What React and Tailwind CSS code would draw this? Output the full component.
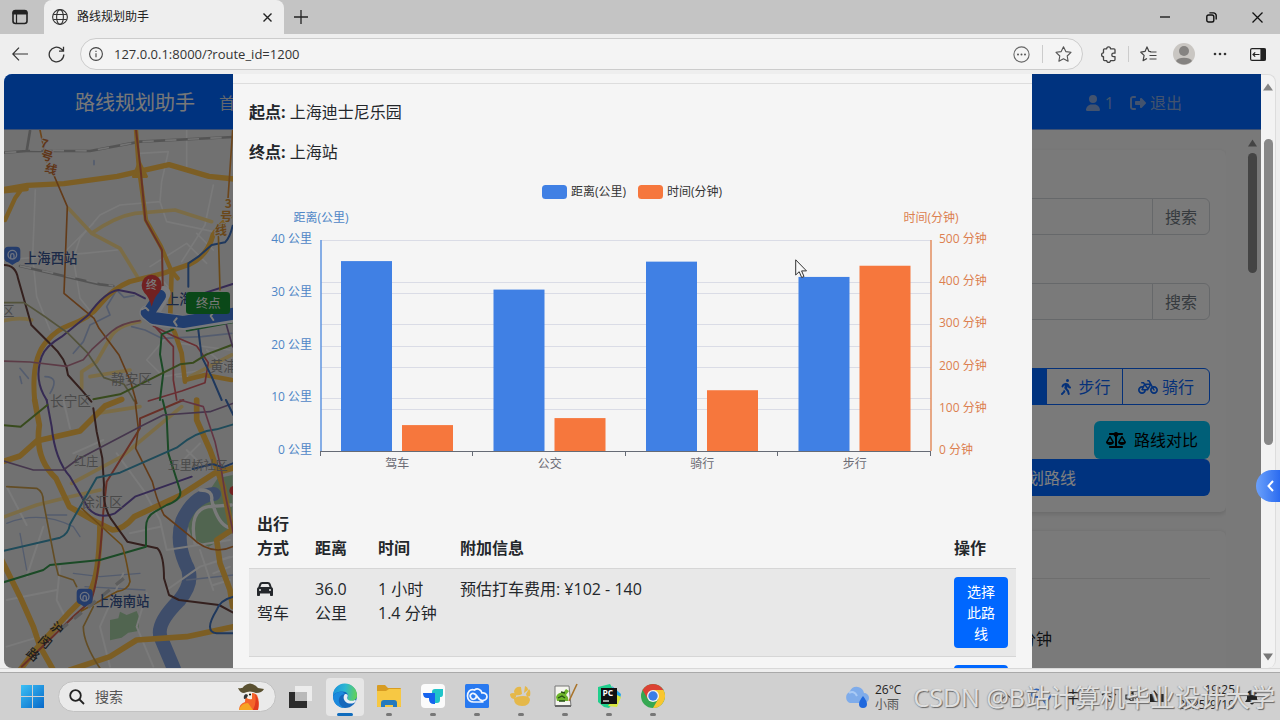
import React from "react";
import { FaUser, FaRightFromBracket, FaPersonWalking, FaBicycle, FaScaleBalanced, FaCar } from "react-icons/fa6";

function TabStrip() {
  return (
    <header className="flex h-[34px] shrink-0 items-stretch bg-[#c4c4c4]">
      <button aria-label="标签页操作" className="flex w-[44px] items-center justify-center pr-1">
        <svg width="16" height="16" viewBox="0 0 16 16" fill="none" stroke="#222">
          <rect x="1" y="1.5" width="14" height="13" rx="2.5" strokeWidth="1.6" />
          <path d="M1 5V4a2.500 2.500 0 0 1 2.500-2.500h9A2.500 2.500 0 0 1 15 4v1z" fill="#222" />
          <path d="M4.500 5v9.500" strokeWidth="1.200" />
        </svg>
      </button>
      <div className="flex w-[240px] items-center rounded-t-lg bg-[#eeeeee] pl-2 pr-2.5 text-xs text-[#222]">
        <svg width="16" height="16" viewBox="0 0 16 16" fill="none" stroke="#333" strokeWidth="1.1">
          <circle cx="8" cy="8" r="7.4" />
          <ellipse cx="8" cy="8" rx="3.4" ry="7.400" />
          <path d="M1.300 5.500h13.400M1.300 10.500h13.400" />
        </svg>
        <span className="ml-[9px] flex-1">路线规划助手</span>
        <button aria-label="关闭标签页" className="p-0.5">
          <svg width="9" height="9" viewBox="0 0 9 9" stroke="#222" strokeWidth="1.4"><path d="M.5.5l8 8M8.500.5l-8 8" /></svg>
        </button>
      </div>
      <button aria-label="新建标签页" className="px-2.5">
        <svg width="14" height="14" viewBox="0 0 14 14" stroke="#222" strokeWidth="1.300"><path d="M7 0v14M0 7h14" /></svg>
      </button>
      <div className="ml-auto flex">
        <button aria-label="最小化" className="flex w-[46px] items-center justify-center">
          <svg width="10" height="10" viewBox="0 0 10 10" stroke="#111" strokeWidth="1.300"><path d="M0 5h10" /></svg>
        </button>
        <button aria-label="还原" className="flex w-[46px] items-center justify-center">
          <svg width="11" height="11" viewBox="0 0 11 11" fill="none" stroke="#111" strokeWidth="1.4">
            <rect x=".8" y="3" width="7" height="7" rx="1.8" />
            <path d="M3.400 .9h4A2.700 2.700 0 0 1 10.200 3.600v4" />
          </svg>
        </button>
        <button aria-label="关闭" className="flex w-[46px] items-center justify-center">
          <svg width="11" height="11" viewBox="0 0 11 11" stroke="#111" strokeWidth="1.300"><path d="M.5.5l10 10M10.500.5l-10 10" /></svg>
        </button>
      </div>
    </header>
  );
}

function AddressBar() {
  return (
    <nav className="flex h-10 shrink-0 items-center bg-[#eeeeee] text-[#333]">
      <button aria-label="后退" className="ml-3">
        <svg width="16" height="14" viewBox="0 0 16 14" fill="none" stroke="#333" strokeWidth="1.2"><path d="M16 7H1M7 .7L.8 7 7 13.300" /></svg>
      </button>
      <button aria-label="刷新" className="ml-5">
        <svg width="17" height="17" viewBox="0 0 17 17" fill="none" stroke="#333" strokeWidth="1.3">
          <path d="M15.800 8.500A7.300 7.300 0 1 1 13.300 3L15.500 5M15.500 .7V5.200H11" />
        </svg>
      </button>
      <div className="ml-[15px] flex h-8 flex-1 items-center rounded-full border border-[#cccccc] bg-[#f4f4f4] pl-2 pr-2.5">
        <svg width="14" height="14" viewBox="0 0 14 14" fill="none" stroke="#444" strokeWidth="1.100">
          <circle cx="7" cy="7" r="6.400" /><path d="M7 6.200v4M7 3.800v1.200" />
        </svg>
        <input aria-label="地址" defaultValue="127.0.0.1:8000/?route_id=1200" className="ml-[11px] min-w-0 flex-1 bg-transparent pt-0.5 text-[13px] text-[#333] outline-none" />
        <svg width="17" height="17" viewBox="0 0 17 17" fill="none" stroke="#666" strokeWidth="1.1">
          <circle cx="8.500" cy="8.500" r="7.600" />
          <g fill="#555" stroke="none"><circle cx="5" cy="8.500" r="1" /><circle cx="8.500" cy="8.500" r="1" /><circle cx="12" cy="8.500" r="1" /></g>
        </svg>
        <span className="mx-3 h-[18px] w-px bg-[#cccccc]" />
        <svg width="17" height="16" viewBox="0 0 17 16" fill="none" stroke="#555" strokeWidth="1.100" strokeLinejoin="round">
          <path d="M8.500 .8l2.300 4.800 5.200.7-3.800 3.700.9 5.200-4.600-2.500-4.600 2.500.9-5.200L1 6.300l5.200-.7z" />
        </svg>
      </div>
      <button aria-label="扩展" className="ml-[17px]">
        <svg width="17" height="17" viewBox="0 0 17 17" fill="none" stroke="#444" strokeWidth="1.3" strokeLinejoin="round">
          <path d="M4.500 2.800h2.200a1.900 1.900 0 0 1 3.800 0H14q1 0 1 1v3.400h-1.500a1.700 1.700 0 0 0 0 3.400H15v3q0 1-1 1h-3.500a1.900 1.900 0 0 1-3.800 0H4.500q-1 0-1-1v-3a1.900 1.900 0 0 1 0-3.800v-3q0-1 1-1z" />
        </svg>
      </button>
      <span className="mx-[11px] h-4 w-px bg-[#cccccc]" />
      <button aria-label="收藏夹">
        <svg width="17" height="16" viewBox="0 0 17 16" fill="none" stroke="#444" strokeWidth="1.200" strokeLinejoin="round">
          <path d="M11 5.600L9 5.400 7 .9 5 5.400.8 6.200l3.300 3.200-1 5.200 3.900-2.100M10 6h6.500M9.500 9.500h7M9.500 13h7" />
        </svg>
      </button>
      <button aria-label="用户" className="ml-4">
        <svg width="22" height="22" viewBox="0 0 22 22"><circle cx="11" cy="11" r="11" fill="#c9c6c2" /><circle cx="11" cy="8" r="5" fill="#858381" /><path d="M3 18a8.500 5 0 0 1 16 0 11 11 0 0 1-16 0z" fill="#858381" /></svg>
      </button>
      <button aria-label="设置及其他" className="ml-[18px]">
        <svg width="14" height="4" viewBox="0 0 14 4" fill="#333"><circle cx="2" cy="2" r="1.300" /><circle cx="7" cy="2" r="1.300" /><circle cx="12" cy="2" r="1.300" /></svg>
      </button>
      <button aria-label="侧边栏" className="ml-[23px] mr-3.5">
        <svg width="16" height="13" viewBox="0 0 16 13" fill="none" stroke="#222" strokeWidth="1.2">
          <rect x=".6" y=".6" width="14.800" height="11.800" rx="1.5" /><path d="M11 1h4v11h-4z" fill="#222" /><path d="M9.500 6.500H3M5.200 4.300L3 6.500l2.200 2.200" />
        </svg>
      </button>
    </nav>
  );
}

function RailPin({ x, y }) {
  return (
    <g transform={`translate(${x} ${y})`}>
      <path d="M-12-26h24q12 0 12 12V8q0 10-11 13L0 29-13 21q-11-3-11-13V-14q0-12 12-12z" fill="#4878d8" />
      <circle r="13" cy="-2" fill="none" stroke="#dbe6ff" strokeWidth="4" />
      <path d="M-5 10V0a5 5 0 0 1 10 0v10" fill="none" stroke="#dbe6ff" strokeWidth="4" />
    </g>
  );
}

function CityMap() {
  return (
    <svg className="h-full w-full bg-[#e2e2e2]" fill="none" strokeLinejoin="round" strokeLinecap="round">
      <g transform="translate(-4 0) scale(.33333)">
        <g stroke="#f4f4f4" strokeWidth="5">
          <path d="M106 180L98 380l12 120 40 100M560 0v120M420 70l85-5-20 90-5 60-120 10-60 30-60 70-20 60 20 120 40 50M12 390l240-20 100-10M200 360l80-80M480 215l20 60 140 30M640 165l-25 120-70 110M450 410l110-70 60 60M470 430l50 60M640 360l-50-50M500 620l-60 70 50 50 120-20M540 640l150 20M620 660l70 60M530 740h120" />
        </g>
        <g stroke="#a9a9a9" strokeWidth="8">
          <path d="M10 68l70-5 10-60M80 63l190 0 150-28 280-14M60 408l240 55 40 5" />
          <path d="M15 68l65-5M90 60l180 3 150-28 280-14M60 408l280 60" stroke="#e8e8e8" strokeWidth="5" strokeDasharray="34 34" strokeLinecap="butt" />
        </g>
        <g stroke="#a8b9dc" strokeWidth="5">
          <path d="M350 480l-30 50 10 25-60 30-20 50-30 35M352 482l20 20 30-5M395 590l40 10 50 25 120-5 90-10M135 740q45 0 15 50M60 715l25 30M282 92v12M60 740l5 20" />
        </g>
        <g stroke="#f7d98c" strokeWidth="11">
          <path d="M205 235l70 75 85 45 55 90M275 310q70-50 130-60l120-10 110 35M0 575q50-15 95-5M420 575q-70 10-90 50l-40 70-45 30 0 50M270 740l120-20M570 740l125-65" />
        </g>
        <g stroke="#f8bc48">
          <path d="M12 178l70-12 110-5 160-22 75-17 80-18 120 35 75 8" strokeWidth="16" />
          <path d="M408 0l8 110 22 160 45 80 30 70 20 25" strokeWidth="13" />
          <path d="M104 810q-12-130 40-180 25-30 65-45 60-20 90-60 40-50 90-70l100-25 60-20q70-20 90-95 20-30 50-55" strokeWidth="15" />
          <path d="M515 420l-5 160 15 30 20 60 10 85M555 750l60-15 80 15" strokeWidth="14" />
          <path d="M15 270l30-65 25-35M0 185l80-8" strokeWidth="13" />
          <path d="M400 140l18-45 22 45z" strokeWidth="8" fill="#f8bc48" />
        </g>
        <path d="M155 120l47 110-10 260 90 75 15 30 60 80 35 80 18 65" stroke="#c77732" strokeWidth="5" />
        <path d="M120 0l20 95M698 0l-15 220" stroke="#d98d39" strokeWidth="5" />
        <path d="M408 0l14 120 14 150 50 90 3 140" stroke="#cf654d" strokeWidth="6" />
        <path d="M12 405q35 0 42 40l40 140 60 60q45 40 50 90l45 50 25 30" stroke="#68403c" strokeWidth="6" />
        <path d="M140 810q-40-60-15-130 10-30 60-60l80-65q50-70 90-75l50 10 30 15M580 500l118-38" stroke="#6c55a7" strokeWidth="6" />
        <path d="M12 518h60l60 40 70 50 60 60 50 75 60 20q20 30 30 50" stroke="#a6a677" strokeWidth="5" />
        <path d="M0 693l90 3 110 13 50-20 25-30 60-55q30-25 85-32" stroke="#b9768c" strokeWidth="5" />
        <path d="M460 588l60 30 70 30 35 50-10 60-70 25-100 30M465 590l55 60v100l10 60" stroke="#d25c64" strokeWidth="5" />
        <path d="M565 470V400l30-20 40-35 40-8q15-15 23-50M595 600l10 80 30 60 30 70" stroke="#3e70ba" strokeWidth="6" />
        <path d="M520 598l-35 15-5 60 10 55-10 82M560 602l138-25" stroke="#36944c" strokeWidth="6" />
        <path d="M280 808l80-15 180-90 40-5 40-25 75-28" stroke="#71963a" strokeWidth="6" />
        <path d="M655 310l5 170" stroke="#d6942f" strokeWidth="5" />
        <path d="M675 570l23 80" stroke="#846698" strokeWidth="5" />

        <path d="M440 548l25 18 90 12 170-26M455 550l35-60" stroke="#f2f4fa" strokeWidth="44" />
        <path d="M440 548l20 16 90 12 170-28M448 545l32-48" stroke="#437bdd" strokeWidth="36" />
        <path d="M530 565l-8 10 8 12M640 548l-8 10 8 12M425 538l12-5 8 8" stroke="#f5f5f5" strokeWidth="6" />

        <g fontFamily='"Noto Sans CJK SC"' stroke="none">
          <text x="72" y="398" fontSize="40" fill="#37538e" fontWeight="500">上海西站</text>
          <text x="498" y="523" fontSize="40" fill="#37538e" fontWeight="500">上海</text>
          <text x="5" y="556" fontSize="38" fill="#949494">区</text>
          <text x="333" y="762" fontSize="41" fill="#949494">静安区</text>
          <text x="630" y="724" fontSize="40" fill="#949494">黄浦</text>
          <g fill="#c06c32" fontSize="36" fontWeight="700" stroke="#e2e2e2" strokeWidth="6" paintOrder="stroke">
            <text transform="translate(120 50) rotate(15)">7</text><text transform="translate(120 84) rotate(18)">号</text><text transform="translate(132 124) rotate(18)">线</text>
          </g>
          <g fill="#d58f32" fontSize="36" fontWeight="700" stroke="#e2e2e2" strokeWidth="6" paintOrder="stroke">
            <text x="674" y="234">3</text><text x="661" y="274">号</text><text x="645" y="315">线</text>
          </g>
        </g>
        <RailPin x={37} y={376} />
        <path d="M455 530q-8-30-22-42a30 32 0 1 1 44 0q-14 12-22 42z" fill="#e34343" />
        <rect x="558" y="486" width="132" height="66" rx="10" fill="#159130" />
        <g fontFamily='"Noto Sans CJK SC"' fill="#f4f4f4">
          <text x="438" y="477" fontSize="33" fontWeight="500">终</text>
          <text x="588" y="533" fontSize="37">终点</text>
        </g>
      </g>

      <g transform="translate(-4 270) scale(.33333)">
        <path d="M698 225l-45 10-20 30-50 35-27 55 20 60 50 25 70-40z" fill="#a3cba0" />
        <path d="M330 660l25-5 5-20 20 10 30-12 8 20-3 40-30 5-20 15-35 8z" fill="#a3cba0" />
        <path d="M642 282q-60 5-95 80-20 60 10 130 30 50-20 110-70 70-55 110l40 95" stroke="#7d9bd5" strokeWidth="42" />
        <path d="M560 540l140-15M20 370q100-40 200 10l20 30M140 345h60M60 400l20 110M220 520l80 10 120-10M255 560l180 10M590 700l100-20" stroke="#a8b9dc" strokeWidth="4" />
        <g stroke="#f4f4f4" strokeWidth="6">
          <path d="M20 260l60 115M130 380l-50 150M180 500l-10 100 30 60M190 0l20 85M350 160l80 110 50 90 20 90 190-30M310 120l-90 40M370 520l-70 160 30 120M390 400l90-20M500 570l100-70 98-30M600 450l40 120M20 600l150-30M20 740l100-30M440 580l-30 100 50 120M560 150l60 60M540 190l60-60M630 490l60-20M640 520l50-20M640 555l50-15" />
          <path d="M585 430q-20-100 40-110l70-5M600 270q40 0 35 30 20 80 60 85" strokeWidth="10" />
        </g>
        <g stroke="#f7d98c" strokeWidth="11">
          <path d="M0 355l110-40 100-25 90-20M215 250l150-80 180-150M290 40l130-20" />
        </g>
        <g stroke="#f8bc48" strokeWidth="17">
          <path d="M104 0l14 75q-15 100 50 160l40 85 80 45 50 25q30 0 65-40l140-65 100-65 70-20" />
          <path d="M0 188l60-20 50-45 130-30 75-75 50-20M0 470l60 120 40 90 20 60 40 70" />
          <path d="M60 810l50-65 100-110 60-60q28-50 30-200" />
          <path d="M210 810l120-40 80-50 150-10 140-30" />
          <path d="M590 0v60l40 90 40 110 25 130-45 30 10 70 30 80 8 50" />
        </g>
        <path d="M65 800l160-155 45-40q25-40 40-270l10-90 100-160v-30L550 0" stroke="#d1604f" strokeWidth="6" />
        <path d="M405 0l10 85-8 60 50 100q15 60 35 100l80 65q60 60 125 30" stroke="#c77732" strokeWidth="5" />
        <path d="M140 0l15 80q10 100 55 150l55 95q30 35 80 15l60-50 170-60" stroke="#6c55a7" strokeWidth="6" />
        <path d="M280 25l10 70 17 80 5 80q-5 60 20 100l50 70 90 20q20 20 20 90l15 50 30 15 120 15 41 22" stroke="#68403c" strokeWidth="6" />
        <path d="M0 75l62 5 80-65" stroke="#71963a" strokeWidth="6" />
        <path d="M488 0l12 50 5 110 35 110q8 28-40 45l-35 20q-28 15-27 50v55L300 480l-150 15-20 15L0 550" stroke="#36944c" strokeWidth="6" />
        <path d="M0 455l180-42q25-10 30-40l80-140 70-15 170-75q60-50 120-55l50-15" stroke="#3e96b4" strokeWidth="6" />
        <path d="M20 260l90 5q20 10 20 40l35 180 10 40 45 15 10 20M280 620l-30 60q0 50 50 125" stroke="#c79b4b" strokeWidth="5" />
        <path d="M0 180l100 30h90l40-30 200-105 60-30 140-10 70-25" stroke="#8b6d9a" strokeWidth="5" />
        <path d="M245 325l120 110q10 20 25 110-5 25-40 30l-110 60" stroke="#d6942f" strokeWidth="5" />
        <path d="M540 0l70 20 35 105 20 90 10 65 25 120" stroke="#c56a86" strokeWidth="5" />
        <path d="M678 0l22 45M698 190l-30 12-30-10-60 15M700 590q-40 10-50 40-40 65 0 70h50" stroke="#3e70ba" strokeWidth="6" />
        <circle cx="702" cy="272" r="14" fill="#e34343" />
        <path d="M180 690l210-170" stroke="#bbb" strokeWidth="10" strokeDasharray="30 24" strokeLinecap="butt" />
        <g fontFamily='"Noto Sans CJK SC"' fill="#949494">
          <text x="150" y="18" fontSize="41">长宁区</text>
          <text x="223" y="199" fontSize="36">红庄</text>
          <text x="243" y="321" fontSize="42">徐汇区</text>
          <text x="503" y="211" fontSize="36">五里桥社区</text>
          <text x="288" y="617" fontSize="40" fill="#37538e" fontWeight="500">上海南站</text>
          <g fill="#3c3c3c" fontSize="38" fontWeight="500">
            <text transform="translate(148 684) rotate(40)">沪</text>
            <text transform="translate(112 724) rotate(40)">闵</text>
            <text transform="translate(76 762) rotate(40)">路</text>
          </g>
        </g>
        <RailPin x={254} y={592} />
      </g>
    </svg>
  );
}

function PlaceField({ id, label }) {
  return (
    <div className="mb-4">
      <label htmlFor={id} className="mb-2 block leading-6">{label}</label>
      <div className="flex h-[37px]">
        <input id={id} className="min-w-0 flex-1 rounded-l-md border border-[#cdd0d4] bg-transparent px-3" />
        <button className="-ml-px rounded-r-md border border-[#cdd0d4] px-3 text-[#6c757d]">搜索</button>
      </div>
    </div>
  );
}

function Sidebar() {
  return (
    <aside className="flex shrink-0 bg-[#f3f3f3]">
      <div className="flex w-[386px] flex-col gap-[19px] overflow-hidden pl-[22px] pt-5">
        <section className="shrink-0 rounded-md bg-[#f5f5f5] p-4 shadow-[0_2px_5px_rgba(0,0,0,0.14)]">
          <PlaceField id="start" label="起点" />
          <PlaceField id="end" label="终点" />
          <div className="mb-2 h-6">方式</div>
          <div className="mb-4 flex h-[37px] text-[#0a63f2]">
            <button className="flex-1 rounded-l-md bg-[#0067ff] text-white">公交</button>
            <button className="flex w-[77px] items-center justify-center gap-1 border border-[#0a63f2]"><FaPersonWalking />步行</button>
            <button className="-ml-px flex w-[88px] items-center justify-center gap-1 rounded-r-md border border-[#0a63f2]"><FaBicycle size="20" />骑行</button>
          </div>
          <div className="flex justify-end">
            <button className="flex h-[38px] items-center gap-2 rounded-md bg-[#00bff0] px-3 text-black"><FaScaleBalanced size="20" />路线对比</button>
          </div>
          <button className="h-[37px] w-full rounded-md bg-[#0067ff] text-white">规划路线</button>
        </section>
        <section className="shrink-0 rounded-md bg-[#f5f5f5] p-4 shadow-[0_1px_5px_rgba(0,0,0,0.14)]">
          <div className="h-8 border-b border-[#dcdcdc]" />
          <p className="mt-12 w-[174px] text-right leading-6">1 分钟</p>
          <p className="mt-3 w-[185px] text-right leading-6">140</p>
        </section>
      </div>
      <div className="flex w-[35px] flex-col items-end pr-1 pt-[9px]">
        <svg width="9" height="8" viewBox="0 0 9 8" fill="#888"><path d="M4.500.5L9 7.500H0z" /></svg>
        <div className="mt-[6px] h-[120px] w-[9px] rounded-full bg-[#888888]" />
      </div>
    </aside>
  );
}

const routes = [
  { name: "驾车", km: 36, min: 61.4 },
  { name: "公交", km: 30.6, min: 78 },
  { name: "骑行", km: 35.9, min: 144 },
  { name: "步行", km: 33, min: 439 },
];

function CompareChart() {
  const left = 72, right = 682, top = 60, bottom = 271;
  const step = (right - left) / routes.length;
  const h = bottom - top;
  return (
    <svg viewBox="0 0 767 300" className="block w-full text-xs" role="img" aria-label="路线距离与时间对比">
      <rect x="293" y="5" width="25" height="14" rx="3.500" fill="#4080e4" />
      <text x="322" y="16" fill="#333">距离(公里)</text>
      <rect x="389" y="5" width="25" height="14" rx="3.500" fill="#f6773d" />
      <text x="418" y="16" fill="#333">时间(分钟)</text>
      <text x={left} y="42" textAnchor="middle" fill="#4f86c6">距离(公里)</text>
      <text x={right} y="42" textAnchor="middle" fill="#dc8050">时间(分钟)</text>
      {[0, 10, 20, 30, 40].map((v) => {
        const y = bottom - (v / 40) * h;
        return (
          <g key={v}>
            <path d={`M${left} ${Math.round(y) + 0.5}H${right}`} stroke="#dadce6" />
            <text x={left - 9} y={y + 3} textAnchor="end" fill="#4f86c6">{v} 公里</text>
          </g>
        );
      })}
      {[0, 100, 200, 300, 400, 500].map((v) => {
        const y = bottom - (v / 500) * h;
        return (
          <g key={v}>
            <path d={`M${left} ${Math.round(y) + 0.5}H${right}`} stroke="#dadce6" />
            <text x={right + 8} y={y + 3} fill="#dc8050">{v} 分钟</text>
          </g>
        );
      })}
      {routes.map((r, i) => {
        const x = left + i * step;
        return (
          <g key={r.name}>
            <rect x={x + 20} y={bottom - (r.km / 40) * h} width="51" height={(r.km / 40) * h} fill="#4080e4" />
            <rect x={x + 81} y={bottom - (r.min / 500) * h} width="51" height={(r.min / 500) * h} fill="#f6773d" />
            <text x={x + step / 2} y="288" textAnchor="middle" fill="#6b6b74">{r.name}</text>
          </g>
        );
      })}
      <path d={`M${left} ${top}V${bottom}`} stroke="#5f94df" strokeWidth="1.500" />
      <path d={`M${right} ${top}V${bottom}`} stroke="#e28c5e" strokeWidth="1.500" />
      <path d={`M${left} 271.500H${right}` + [0, 1, 2, 3, 4].map((i) => `M${Math.floor(left + i * step) - 0.5} 271V276`).join("")} stroke="#666b75" />
    </svg>
  );
}

function CompareDialog() {
  return (
    <div role="dialog" aria-label="路线对比" className="mx-auto min-h-full max-w-[799px] bg-[#f5f5f5] text-[#24272b]">
      <div className="h-2.5 border-b border-[#dddddd]" />
      <div className="p-4">
        <p className="mb-4 leading-6"><strong>起点:</strong> 上海迪士尼乐园</p>
        <p className="mb-4 leading-6"><strong>终点:</strong> 上海站</p>
        <div className="relative mb-6">
          <CompareChart />
          <svg className="absolute left-[546px] top-[79px]" width="13" height="20" viewBox="0 0 13 20" fill="#f8f8f8" stroke="#333">
            <path d="M.7.8V16l3.500-3.300 2.500 5.800 2.300-1-2.400-5.600h4.900z" />
          </svg>
        </div>
        <table className="w-full table-fixed text-left leading-6">
          <colgroup>
            <col className="w-[58px]" /><col className="w-[63px]" /><col className="w-[82px]" /><col /><col className="w-[70px]" />
          </colgroup>
          <thead className="align-bottom">
            <tr className="border-b border-[#d6d6d6]">
              <th className="p-2">出行方式</th><th className="p-2">距离</th><th className="p-2">时间</th><th className="p-2">附加信息</th><th className="p-2">操作</th>
            </tr>
          </thead>
          <tbody className="align-top">
            <tr className="border-b border-[#d6d6d6] bg-[#e8e8e8]">
              <td className="p-2"><span className="flex h-6 items-center"><FaCar /></span>驾车</td>
              <td className="p-2">36.0 公里</td>
              <td className="p-2">1 小时 1.4 分钟</td>
              <td className="p-2">预估打车费用: ¥102 - 140</td>
              <td className="p-2"><button className="block w-full rounded bg-[#0067ff] px-[9px] py-1 text-sm leading-[21px] text-white">选择此路线</button></td>
            </tr>
            <tr>
              <td colSpan="4" />
              <td className="p-2"><button aria-label="选择公交路线" className="block h-[73px] w-full rounded bg-[#0067ff]" /></td>
            </tr>
          </tbody>
        </table>
      </div>
    </div>
  );
}

function WebPage() {
  return (
    <div className="flex min-h-0 flex-1 bg-[#eeeeee] pl-1">
      <div className="relative flex min-w-0 flex-1 flex-col overflow-hidden rounded-l-lg text-[#212529]">
        <nav className="flex h-14 shrink-0 items-center border-b border-[#7aa3e8] bg-[#0067ff] pl-[71px] pr-[79px] pt-[3px]">
          <a href="#home" className="text-xl text-[#f0f0f0]">路线规划助手</a>
          <a href="#index" className="ml-6 text-[#c8d0dc]">首页</a>
          <span className="ml-auto flex items-center gap-1 text-[#87a6dc]"><FaUser />1</span>
          <a href="#logout" className="ml-4 flex items-center gap-1 text-[#87a6dc]"><FaRightFromBracket />退出</a>
        </nav>
        <div className="flex min-h-0 flex-1">
          <div className="min-w-0 flex-1"><CityMap /></div>
          <Sidebar />
        </div>
        <div className="absolute inset-0 overflow-hidden bg-black/50">
          <CompareDialog />
        </div>
      </div>
      <div className="relative mr-1 flex w-[15px] shrink-0 flex-col items-center rounded-r-lg border-r border-t border-[#dddddd] bg-[#f3f3f3] pb-[7px] pt-2">
        <svg width="10" height="8" viewBox="0 0 10 8" fill="#858585"><path d="M5 .5L10 7.500H0z" /></svg>
        <div className="mt-12 h-[306px] w-[9px] rounded-full bg-[#878787]" />
        <svg className="mt-auto" width="10" height="8" viewBox="0 0 10 8" fill="#777"><path d="M5 7.500L10 .5H0z" /></svg>
        <button aria-label="展开侧栏" className="absolute -right-[5px] top-[395px] flex h-8 w-6 items-center justify-center rounded-l-full bg-linear-to-r from-[#6ba0fa] to-[#2b6bf0] pl-1">
          <svg width="7" height="12" viewBox="0 0 7 12" fill="none" stroke="#fff" strokeWidth="2"><path d="M6 1L1.500 6 6 11" /></svg>
        </button>
      </div>
    </div>
  );
}

const apps = [
  { name: "Edge", icon: (
    <svg width="26" height="26" viewBox="0 0 26 26">
      <defs>
        <linearGradient id="eg" x1="0" y1="0.3" x2="1" y2="0.4"><stop stopColor="#1c93dc" /><stop offset=".5" stopColor="#2bb6d2" /><stop offset="1" stopColor="#62d158" /></linearGradient>
      </defs>
      <circle cx="13" cy="13" r="12" fill="#1467bb" />
      <path d="M1 13a12 12 0 0 1 24-1c.3 4-3 6-6 6-3.500 0-4.500-1.500-3.500-3 2-3-.5-6.500-5-6.500C5 8.500 1.500 11 1 13z" fill="url(#eg)" />
      <path d="M10.500 8.500C5.500 8.500 2 11 1 13.500 1 20 6 25 13 25c-4-1-7-5-6-9 .5-3 3-4.500 6-5z" fill="#1b8ade" />
      <path d="M12.500 11.500c-2.500 4 .5 8.500 5 9 3 .3 5-.5 6-1.500 1-1.500 0-2.500-1.500-1.600-2 .8-5 .6-6.300-.9-1-1.300-.2-2.500.1-3.500 0-1.500-1.300-2.500-3.300-1.500z" fill="#e7eef5" />
    </svg>) },
  { name: "文件资源管理器", icon: (
    <svg width="26" height="26" viewBox="0 0 26 26"><path d="M1 3q0-1 1-1h7l3 3h12q1 0 1 1v17q0 1-1 1H2q-1 0-1-1z" fill="#d89c22" /><path d="M1 8h9l3-2h12v17q0 1-1 1H2q-1 0-1-1z" fill="#f7c843" /><path d="M5 24v-4q0-3 3-3h10q3 0 3 3v4h-4v-2H9v2z" fill="#2479bd" /></svg>) },
  { name: "腾讯会议", icon: (
    <svg width="26" height="26" viewBox="0 0 26 26"><rect x="1" y="1" width="24" height="24" rx="4" fill="#fbfbfb" /><path d="M15 6h8v5q0 3-2 3h-1v3q0 3-3 3h-2v-9h-3V9q0-3 3-3z" fill="#20c4c9" /><path d="M3 10h12v11h-1q-5 0-5-5v-1H7q-4 0-4-5z" fill="#1664ee" /></svg>) },
  { name: "云盘", icon: (
    <svg width="26" height="26" viewBox="0 0 26 26"><rect x="1" y="1" width="24" height="24" rx="1.500" fill="#2879f0" /><path d="M12 12a3 3 0 1 1-4-1.500c2-.5 4 1 6 4 3 5 9 3 9-1 0-3-3-4-5-3.500C17 6 13 5 10.500 7 6 5.500 3.500 9 3.500 13c0 4 3 6 6 6h10" fill="none" stroke="#f0f6ff" strokeWidth="1.700" /></svg>) },
  { name: "小黄掌", icon: (
    <svg width="26" height="26" viewBox="0 0 26 26" fill="#e5b84a"><path d="M6 16q2-3 9-3 7 0 7 4-1 6-8 6-8 0-8-7z" /><path d="M2 11q3-2 6 0 1 2-1 5-5 0-5-5zM6 8q2-5 7-4l1 7q-3 2-6 1-2-1-2-4zM16 10l1-7q3 1 3 4zM18 11l3-5q2 2 1 7l-3 1z" /></svg>) },
  { name: "Notepad++", icon: (
    <svg width="26" height="26" viewBox="0 0 26 26"><path d="M3 3h14l2 20H3z" fill="#f5f5ef" stroke="#777" /><path d="M3 24h16v-2H3z" fill="#666" /><path d="M4 14q2-5 7-4l3-4 3 2-3 4q3 2 2 6H5z" fill="#6eb52b" /><path d="M6 15l4-2 3 2M7 18h6M9 9l4 1" stroke="#234d13" strokeWidth="1.300" fill="none" /><path d="M25 1L17 18" stroke="#a9742b" strokeWidth="1.600" /></svg>) },
  { name: "PyCharm", icon: (
    <svg width="26" height="26" viewBox="0 0 26 26"><path d="M2 4L14 1l3 5 2 12-6 7-5-1-6-5z" fill="#20cf8c" /><path d="M16 3l9 8-1 5-5-2z" fill="#25a6e8" /><path d="M21 12l4 2-4 10-9-1z" fill="#d9e73f" /><path d="M5 5h16v16H5z" fill="#111" /><text x="6.500" y="13" fontSize="8.500" fontWeight="700" fill="#fff" fontFamily="Open Sans">PC</text><path d="M7 18h6" stroke="#fff" strokeWidth="1.200" /></svg>) },
  { name: "Chrome", icon: (
    <svg width="26" height="26" viewBox="0 0 26 26"><circle cx="13" cy="13" r="12" fill="#36a852" /><path d="M13 13L2.600 7A12 12 0 0 1 23.400 7z" fill="#dc4234" /><path d="M13 7h10.400A12 12 0 0 1 13 25l5.200-9z" fill="#f9c62f" /><path d="M2.600 7l5.200 9L13 7h10.400" fill="#dc4234" /><circle cx="13" cy="13" r="6" fill="#f3f3f3" /><circle cx="13" cy="13" r="4.700" fill="#3c7ee8" /></svg>) },
];

function Taskbar() {
  return (
    <footer className="relative flex h-12 shrink-0 items-center border-t border-[#a9a9a9] bg-[#d0d0d0] text-xs text-[#222]">
      <button aria-label="开始" className="ml-[21px]">
        <svg width="23" height="23" viewBox="0 0 23 23">
          <defs><linearGradient id="win" x1="0" y1="0" x2="1" y2="1"><stop stopColor="#3cc0f5" /><stop offset="1" stopColor="#0768c9" /></linearGradient></defs>
          <path d="M0 0h11v11H0zM12 0h11v11H12zM0 12h11v11H0zM12 12h11v11H12z" fill="url(#win)" />
        </svg>
      </button>
      <label className="ml-3.5 flex h-[31px] w-[218px] items-center rounded-full border border-[#c2c2c2] bg-[#eaeaea] pl-2.5 pr-2.5">
        <svg width="16" height="16" viewBox="0 0 16 16" fill="none" stroke="#222" strokeWidth="1.800"><circle cx="6.500" cy="6.500" r="5.300" /><path d="M10.500 10.500L15 15" /></svg>
        <input aria-label="搜索" placeholder="搜索" className="ml-2.5 w-24 flex-1 bg-transparent text-sm outline-none placeholder:text-[#555]" />
        <svg width="28" height="28" viewBox="0 0 28 28">
          <path d="M9 12q-1 4-1 7-6 2-6 8h19q2-9-1-15-5-4-11 0z" fill="#f4652b" />
          <path d="M2 27q2-7 9-7l5 7z" fill="#f6a522" /><path d="M18 11q5 6 3 16h-5q4-8 2-16z" fill="#e03a20" />
          <path d="M9 9h6v7q-4 1-6-2z" fill="#f4f0e6" /><path d="M9 11q-3 1-2 5 3 0 4-4z" fill="#333" /><circle cx="13" cy="11.500" r="1.100" fill="#111" />
          <path d="M1 5q5 1 6-2 6-5 12 0l2 2 6 1q-2 4-8 4-6-3-12 0Q3 10 1 5z" fill="#5a5131" />
        </svg>
      </label>
      <button aria-label="任务视图" className="ml-3">
        <svg width="25" height="24" viewBox="0 0 25 24"><path d="M1 7h18v16H1z" fill="#2c2c2c" /><path d="M7 1h17v15H7z" fill="#f3f3f3" opacity=".8" /><path d="M7 7h12v9H7z" fill="#b9b9b9" /></svg>
      </button>
      <div className="ml-[13px] flex">
        {apps.map((app, i) => (
          <button key={app.name} aria-label={app.name} className="mr-1.5 w-[38px]">
            <span className={i === 0 ? "flex h-[38px] flex-col items-center justify-end rounded bg-[#e6e6e6]" : "flex h-[38px] flex-col items-center justify-end"}>
              {app.icon}
              <span className={i === 0 ? "mt-1 h-[3px] w-4 rounded-full bg-[#0f6cbd]" : "mt-1 h-[3px] w-1.5 rounded-full bg-[#777777]"} />
            </span>
          </button>
        ))}
      </div>
      <div className="ml-auto flex items-center">
        <svg width="25" height="22" viewBox="0 0 25 22"><path d="M6 17a6 6 0 0 1-.5-11Q8 0 14 1q5 1 6 6a5 5 0 0 1 0 10z" fill="#7facea" /><path d="M5 7q5-3 8 3" stroke="#a9caf5" fill="none" strokeWidth="2" /><path d="M19 10q4 5 4 8a4 4 0 0 1-8 0q0-3 4-8z" fill="#1f68dd" /></svg>
        <div className="ml-1.5 w-[126px] leading-[15px]"><div>26°C</div><div className="text-[#555]">小雨</div></div>
        <svg width="12" height="8" viewBox="0 0 12 8" fill="none" stroke="#444" strokeWidth="1.300"><path d="M1 6l5-4 5 4" /></svg>
        <svg className="ml-4" width="24" height="20" viewBox="0 0 24 20" fill="none" stroke="#2d62b8" strokeWidth="1.800"><path d="M9 10H4a3 3 0 0 1 0-5q2-4 6-2M13 11l4 6 5-9" /></svg>
        <span className="ml-3 text-base">中</span>
        <svg className="ml-5" width="16" height="14" viewBox="0 0 16 14" fill="none" stroke="#222" strokeWidth="1.300"><path d="M1 5q7-6 14 0M4 8q4-3 8 0M7 11h2" /></svg>
        <svg className="ml-2" width="15" height="12" viewBox="0 0 15 12" fill="none" stroke="#222" strokeWidth="1.200"><path d="M1 4v4h3l4 3V1L4 4zM10 4l4 4M14 4l-4 4" /></svg>
        <svg className="ml-2.5" width="17" height="14" viewBox="0 0 17 14" fill="#222"><path d="M0 4h14v8H0zM15 6h2v4h-2zM4 0l4 5H2z" /></svg>
        <div className="w-[68px] text-right leading-[15px]"><div>19:25</div><div>2025/9/19</div></div>
        <svg className="ml-2.5 mr-[21px]" width="14" height="16" viewBox="0 0 14 16" fill="#222"><path d="M7 1q5 0 5 6v3l2 3H0l2-3V7q0-6 5-6zM5 14h4q-2 3-4 0z" /></svg>
      </div>
      <div className="pointer-events-none absolute right-[5px] top-2 whitespace-nowrap text-[25px] leading-8 text-[#ececec]/90 [text-shadow:1px_1px_1px_#666,-1px_0_1px_#aaa]">CSDN @B站计算机毕业设计大学</div>
    </footer>
  );
}

export default function App() {
  return (
    <div className="flex h-screen flex-col overflow-hidden bg-[#eeeeee] font-['Open_Sans','Noto_Sans_CJK_SC',sans-serif] text-base">
      <TabStrip />
      <AddressBar />
      <WebPage />
      <div className="h-1 shrink-0 border-t border-[#d8d8d8] bg-[#eeeeee]" />
      <Taskbar />
    </div>
  );
}
